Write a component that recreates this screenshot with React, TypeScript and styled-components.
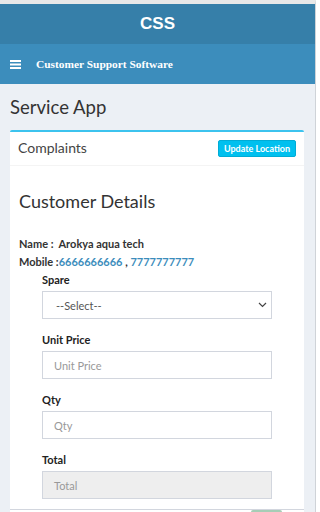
import React from "react";
import styled, { createGlobalStyle } from "styled-components";

const Global = createGlobalStyle`
  html, body { margin: 0; padding: 0; background: #ffffff; }
  body { font-family: Lato, "Liberation Sans", sans-serif; overflow: hidden; }
  * { box-sizing: border-box; }
`;

const Frame = styled.div`
  width: 316px;
  height: 512px;
  overflow: hidden;
  border-top: 4px solid #e8e8e8;
  border-right: 1px solid #cfd3d8;
  background: #ecf0f5;
  display: flex;
  flex-direction: column;
  & > * { flex-shrink: 0; }
`;

const LogoBar = styled.div`
  height: 40px;
  background: #367fa9;
  display: flex;
  align-items: center;
  justify-content: center;
  color: #fff;
  font-family: "Liberation Sans", Arial, sans-serif;
  font-weight: 700;
  font-size: 17px;
`;

const NavBar = styled.div`
  height: 40px;
  background: #3c8dbc;
  display: flex;
  align-items: center;
  padding-left: 10px;
  gap: 15px;
  color: #fff;
`;

const NavTitle = styled.span`
  font-family: "Liberation Serif", "Times New Roman", serif;
  font-weight: 700;
  font-size: 11.4px;
`;

const Content = styled.div`
  padding: 10px 11px 0 10px;
  display: flex;
  flex-direction: column;
`;

const PageTitle = styled.h1`
  margin: 0;
  font-weight: 400;
  font-size: 18.5px;
  line-height: 26px;
  color: #333;
`;

const Box = styled.div`
  margin-top: 10px;
  background: #fff;
  border-top: 2px solid #3cc3ee;
  border-radius: 2px 2px 0 0;
  display: flex;
  flex-direction: column;
  & > * { flex-shrink: 0; }
`;

const BoxHeader = styled.div`
  display: flex;
  justify-content: space-between;
  align-items: flex-start;
  padding: 6px 8px 0 8px;
  height: 34px;
  border-bottom: 1px solid #f4f4f4;
`;

const BoxTitle = styled.span`
  font-size: 14px;
  color: #444;
  line-height: 20px;
`;

const InfoButton = styled.button`
  margin-top: 2px;
  border: 1px solid #00acd6;
  background: #00c0ef;
  color: #fff;
  font-family: Lato, sans-serif;
  font-weight: 700;
  font-size: 9px;
  padding: 0 5px;
  height: 17px;
  border-radius: 2px;
`;

const BoxBody = styled.div`
  padding: 22px 9px 0 9px;
  display: flex;
  flex-direction: column;
`;

const SectionTitle = styled.h2`
  margin: 0;
  font-weight: 400;
  font-size: 18px;
  line-height: 26px;
  color: #333;
`;

const InfoLines = styled.div`
  margin-top: 21px;
  font-size: 11px;
  font-weight: 700;
  color: #333;
  line-height: 18px;
`;

const Phone = styled.span`
  color: #3c8dbc;
`;

const FormGroup = styled.div`
  padding: 0 32px 0 32px;
  display: flex;
  flex-direction: column;
  margin-bottom: 12px;
`;

const Label = styled.label`
  font-size: 11px;
  font-weight: 700;
  color: #222;
  line-height: 17px;
  margin-bottom: 3px;
`;

const Field = styled.div<{ $disabled?: boolean; $placeholder?: boolean; $select?: boolean }>`
  height: 28px;
  border: 1px solid #d2d6de;
  background: ${(p) => (p.$disabled ? "#eeeeee" : "#fff")};
  display: flex;
  align-items: center;
  justify-content: space-between;
  padding: ${(p) => (p.$select ? "0 4px 0 13px" : "0 8px 0 11px")};
  font-size: 11px;
  color: ${(p) => (p.$placeholder ? "#999" : "#555")};
`;

const Footer = styled.div`
  margin-top: -2px;
  border-top: 1px solid #d2d6de;
  display: flex;
  justify-content: flex-end;
  padding-right: 22px;
`;

const SaveButton = styled.div`
  width: 31px;
  height: 20px;
  background: #a6cdb6;
  border-radius: 2px;
`;

const Hamburger = () => (
  <svg width="11" height="9" viewBox="0 0 11 9">
    <rect x="0" y="0" width="11" height="2" fill="#fff" />
    <rect x="0" y="3.5" width="11" height="2" fill="#fff" />
    <rect x="0" y="7" width="11" height="2" fill="#fff" />
  </svg>
);

const Chevron = () => (
  <svg width="9" height="6" viewBox="0 0 9 6">
    <path d="M1 1 L4.5 4.5 L8 1" stroke="#444" strokeWidth="1.2" fill="none" />
  </svg>
);

export default function App() {
  return (
    <>
      <Global />
      <Frame>
        <LogoBar>CSS</LogoBar>
        <NavBar>
          <Hamburger />
          <NavTitle>Customer Support Software</NavTitle>
        </NavBar>
        <Content>
          <PageTitle>Service App</PageTitle>
          <Box>
            <BoxHeader>
              <BoxTitle>Complaints</BoxTitle>
              <InfoButton>Update Location</InfoButton>
            </BoxHeader>
            <BoxBody>
              <SectionTitle>Customer Details</SectionTitle>
              <InfoLines>
                <div>Name :&nbsp; Arokya aqua tech</div>
                <div>
                  Mobile :<Phone>6666666666</Phone> , <Phone>7777777777</Phone>
                </div>
              </InfoLines>
            </BoxBody>
            <FormGroup>
              <Label>Spare</Label>
              <Field $select>
                <span>--Select--</span>
                <Chevron />
              </Field>
            </FormGroup>
            <FormGroup>
              <Label>Unit Price</Label>
              <Field $placeholder>Unit Price</Field>
            </FormGroup>
            <FormGroup>
              <Label>Qty</Label>
              <Field $placeholder>Qty</Field>
            </FormGroup>
            <FormGroup>
              <Label>Total</Label>
              <Field $placeholder $disabled>Total</Field>
            </FormGroup>
            <Footer>
              <SaveButton />
            </Footer>
          </Box>
        </Content>
      </Frame>
    </>
  );
}
